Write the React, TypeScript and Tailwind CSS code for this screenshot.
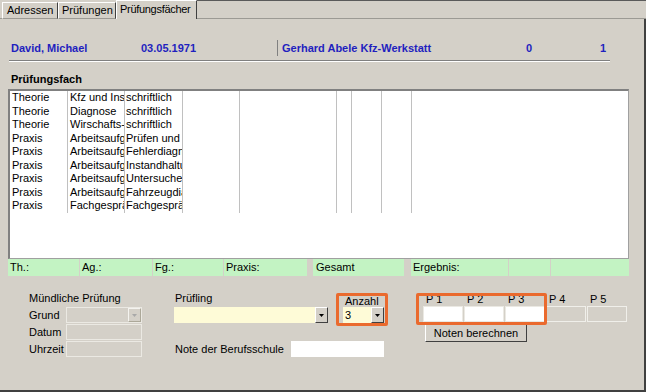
import React from 'react';

const ROWS = [
  ['Theorie', 'Kfz und Instandsetzung', 'schriftlich'],
  ['Theorie', 'Diagnose', 'schriftlich'],
  ['Theorie', 'Wirschafts- und Sozialkunde', 'schriftlich'],
  ['Praxis', 'Arbeitsaufgabe 1', 'Prüfen und Messen'],
  ['Praxis', 'Arbeitsaufgabe 2', 'Fehlerdiagnose'],
  ['Praxis', 'Arbeitsaufgabe 3', 'Instandhaltung'],
  ['Praxis', 'Arbeitsaufgabe 4', 'Untersuchen'],
  ['Praxis', 'Arbeitsaufgabe 5', 'Fahrzeugdiagnose'],
  ['Praxis', 'Fachgespräch', 'Fachgespräch'],
];

function DropBtn({ disabled }: { disabled?: boolean }) {
  return (
    <div
      className={`w-[13px] h-full shrink-0 flex items-center justify-center bg-[#d4d0c8] border ${
        disabled
          ? 'border-t-[#f4f3ef] border-l-[#f4f3ef] border-r-[#aca899] border-b-[#aca899]'
          : 'border-t-white border-l-white border-r-[#404040] border-b-[#404040]'
      }`}
    >
      <svg width="5" height="3" viewBox="0 0 5 3">
        <path d="M0 0h5L2.5 3z" fill={disabled ? '#a8a8a8' : '#000'} />
      </svg>
    </div>
  );
}

function Tab({ label, active, className }: { label: string; active?: boolean; className: string }) {
  return (
    <div
      className={`${className} flex items-center whitespace-nowrap border-t border-l border-r border-t-white border-l-white border-r-[#404040] ${
        active ? 'h-[19px] pb-[2px]' : 'h-[17px] border-b border-b-[#9c9a94]'
      }`}
    >
      {label}
    </div>
  );
}

export default function App() {
  return (
    <div className="w-[646px] h-[392px] bg-[#d4d0c8] font-['Liberation_Sans',Arial,sans-serif] text-[11px] leading-[13px] text-black overflow-hidden flex flex-col">
      {/* tabs */}
      <div className="flex items-end h-[19px] shrink-0">
        <div className="w-[2px] h-[17px] border-b border-[#9c9a94]" />
        <Tab label="Adressen" className="w-[56px] pl-[4px]" />
        <Tab label="Prüfungen" className="w-[58px] pl-[3px]" />
        <Tab label="Prüfungsfächer" active className="w-[81px] pl-[3px] tracking-[-0.3px]" />
        <div className="flex-1 h-[19px] border-b border-b-[#9c9a94] border-t border-t-[#5a5a5a]" />
      </div>

      <div className="flex-1 flex flex-col border-r-2 border-r-[#404040] border-b-2 border-b-[#404040]">
        {/* header */}
        <div className="mt-[21px] h-[16px] flex items-center pl-[11px] font-bold text-[#1f1fbf]">
          <span className="w-[130px]">David, Michael</span>
          <span className="w-[136px]">03.05.1971</span>
          <span className="w-[249px] h-full flex items-center pl-[4px] border-l border-l-[#808080]">
            Gerhard Abele Kfz-Werkstatt
          </span>
          <span className="w-[74px]">0</span>
          <span>1</span>
        </div>
        <div className="ml-[9px] mt-[4px] w-[601px] h-[2px] border-t border-t-[#808080] border-b border-b-white" />

        <div className="mt-[11px] ml-[11px] font-bold">Prüfungsfach</div>

        {/* list */}
        <div className="mt-[3px] ml-[8px] w-[621px] h-[170px] bg-white border-t-2 border-l-2 border-[#808080] border-r border-r-[#a0a0a0] border-b border-b-[#a0a0a0] flex flex-col">
          {ROWS.map((r, i) => (
            <div key={i} className="flex h-[13.5px] leading-[13.5px] whitespace-nowrap">
              <div className="w-[58px] pl-[2px] overflow-hidden border-r border-[#c0c0c0]">{r[0]}</div>
              <div className="w-[57px] pl-[2px] overflow-hidden border-r border-[#c0c0c0]">{r[1]}</div>
              <div className="w-[58px] pl-[1px] overflow-hidden border-r border-[#c0c0c0]">{r[2]}</div>
              <div className="w-[57px] border-r border-[#c0c0c0]" />
              <div className="w-[97px] border-r border-[#c0c0c0]" />
              <div className="w-[15px] border-r border-[#c0c0c0]" />
              <div className="w-[30px] border-r border-[#c0c0c0]" />
              <div className="w-[30px] border-r border-[#c0c0c0]" />
            </div>
          ))}
        </div>

        {/* status bar */}
        <div className="ml-[8px] w-[621px] h-[17px] flex items-center">
          <div className="w-[71px] h-full bg-[#c3f3c3] pl-[2px] flex items-center">Th.:</div>
          <div className="w-[72px] ml-[1px] h-full bg-[#c3f3c3] pl-[2px] flex items-center">Ag.:</div>
          <div className="w-[70px] ml-[1px] h-full bg-[#c3f3c3] pl-[2px] flex items-center">Fg.:</div>
          <div className="w-[83px] ml-[1px] h-full bg-[#c3f3c3] pl-[2px] flex items-center">Praxis:</div>
          <div className="w-[91px] ml-[6px] h-full bg-[#c3f3c3] pl-[3px] flex items-center">Gesamt</div>
          <div className="w-[97px] ml-[7px] h-full bg-[#c3f3c3] pl-[2px] flex items-center">Ergebnis:</div>
          <div className="w-[41px] ml-[1px] h-full bg-[#c3f3c3]" />
          <div className="w-[78px] ml-[1px] h-full bg-[#c3f3c3]" />
        </div>

        {/* bottom form */}
        <div className="mt-[16px] flex items-start">
          {/* Mündliche Prüfung */}
          <div className="ml-[29px] w-[113px] flex flex-col">
            <div className="h-[13px]">Mündliche Prüfung</div>
            <div className="mt-[2px] flex h-[16px] items-center">
              <span className="w-[37px]">Grund</span>
              <div className="w-[76px] h-full flex justify-end border border-[#ebe9e3]">
                <DropBtn disabled />
              </div>
            </div>
            <div className="mt-[1px] flex h-[16px] items-center">
              <span className="w-[37px]">Datum</span>
              <div className="w-[76px] h-full border border-[#ebe9e3]" />
            </div>
            <div className="mt-[1px] flex h-[16px] items-center">
              <span className="w-[37px]">Uhrzeit</span>
              <div className="w-[76px] h-full border border-[#ebe9e3]" />
            </div>
          </div>

          {/* Prüfling / Anzahl / Note */}
          <div className="ml-[32px] w-[214px] flex flex-col">
            <div className="flex items-start">
              <div className="w-[154px] flex flex-col">
                <div className="h-[13px] pl-[1px]">Prüfling</div>
                <div className="mt-[2px] h-[16px] flex justify-end bg-[#fefbd7]">
                  <DropBtn />
                </div>
              </div>
              <div className="ml-[8px] mt-[1px] w-[52px] h-[33px] border-[3px] border-[#ea6a2e] rounded-[2px] flex flex-col pl-[4px] pr-[1px]">
                <div className="h-[10px] leading-[10px] pl-[2px]">Anzahl</div>
                <div className="mt-[1px] h-[16px] w-[41px] flex bg-[#fefbd7]">
                  <span className="flex-1 pl-[2px] leading-[16px]">3</span>
                  <DropBtn />
                </div>
              </div>
            </div>
            <div className="mt-[15px] flex items-center h-[16px]">
              <span className="w-[117px] pl-[1px]">Note der Berufsschule</span>
              <div className="w-[93px] h-full bg-white" />
            </div>
          </div>

          {/* P1 - P5 */}
          <div className="ml-[28px] relative flex flex-col pl-[7px]">
            <div className="flex h-[14px] gap-[1px]">
              {['P 1', 'P 2', 'P 3', 'P 4', 'P 5'].map(p => (
                <span key={p} className="w-[40px] pl-[3px] leading-[15px]">{p}</span>
              ))}
            </div>
            <div className="flex h-[16px] gap-[1px]">
              <div className="w-[40px] h-full bg-white border border-[#ebe9e3]" />
              <div className="w-[40px] h-full bg-white border border-[#ebe9e3]" />
              <div className="w-[40px] h-full bg-white border border-[#ebe9e3]" />
              <div className="w-[40px] h-full border border-[#f0efea]" />
              <div className="w-[40px] h-full border border-[#f0efea]" />
            </div>
            <button className="mt-[2px] ml-[2px] w-[102px] h-[18px] flex items-center justify-center bg-[#d4d0c8] border border-t-white border-l-white border-r-[#404040] border-b-[#404040] text-[11px]">
              Noten berechnen
            </button>
            <div className="absolute left-0 top-[1px] w-[131px] h-[32px] border-[3px] border-[#ea6a2e] rounded-[2px]" />
          </div>
        </div>
      </div>
    </div>
  );
}
